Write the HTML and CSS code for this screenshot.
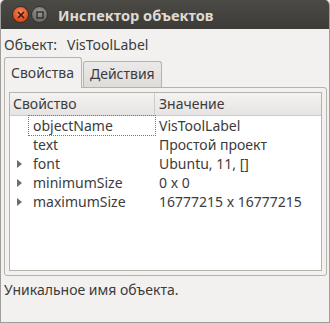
FILE: index.html
```html
<!DOCTYPE html>
<html>
  <head>
    <meta charset="UTF-8">
    <title>Инспектор объектов</title>
    <link rel="stylesheet" href="styles.css">
  </head>
  <body>
    <div class="window">
      <div class="titlebar">
        <span class="btn btn-close">
          <svg width="8" height="8" viewBox="0 0 8 8"><path d="M1 1L7 7M7 1L1 7" stroke="#3a1a10" stroke-width="1.6"/></svg>
        </span>
        <span class="btn btn-min">
          <svg width="8" height="8" viewBox="0 0 8 8"><rect x="1" y="1" width="6" height="6" fill="none" stroke="#2e2e2b" stroke-width="1.4"/></svg>
        </span>
        <span class="title">Инспектор объектов</span>
      </div>

      <div class="content">
        <div class="object-row">Объект:<span class="object-name">VisToolLabel</span></div>

        <div class="tabs">
          <div class="tab active">Свойства</div>
          <div class="tab">Действия</div>
        </div>

        <div class="pane">
          <div class="tree">
            <div class="tree-head">
              <div class="col-name">Свойство</div>
              <div class="col-value">Значение</div>
            </div>
            <div class="row">
              <div class="col-name"><span class="arrow"></span><span class="focus">objectName</span></div>
              <div class="col-value">VisToolLabel</div>
            </div>
            <div class="row">
              <div class="col-name"><span class="arrow"></span>text</div>
              <div class="col-value">Простой проект</div>
            </div>
            <div class="row">
              <div class="col-name"><span class="arrow closed"></span>font</div>
              <div class="col-value">Ubuntu, 11, []</div>
            </div>
            <div class="row">
              <div class="col-name"><span class="arrow closed"></span>minimumSize</div>
              <div class="col-value">0 x 0</div>
            </div>
            <div class="row">
              <div class="col-name"><span class="arrow closed"></span>maximumSize</div>
              <div class="col-value">16777215 x 16777215</div>
            </div>
          </div>
        </div>

        <div class="status">Уникальное имя объекта.</div>
      </div>
    </div>
  </body>
</html>
```

FILE: styles.css
```css
html * {
  box-sizing: border-box;
}

body {
  margin: 0;
  background: #f2f1f0;
  font-family: "Noto Sans", "DejaVu Sans", sans-serif;
  font-size: 14px;
  color: #3c3c3c;
}

.window {
  width: 330px;
  height: 323px;
  display: flex;
  flex-direction: column;
  border-left: 1px solid #9e9d99;
  border-right: 1px solid #9e9d99;
  border-bottom: 1px solid #9e9d99;
  border-radius: 5px 5px 0 0;
  overflow: hidden;
  background: #f2f1f0;
}

.titlebar {
  height: 29px;
  flex: none;
  display: flex;
  align-items: center;
  padding-left: 11px;
  background: linear-gradient(to bottom, #4b4a45, #3c3b37);
}

.btn {
  width: 17px;
  height: 17px;
  border-radius: 50%;
  display: flex;
  align-items: center;
  justify-content: center;
  margin-right: 2px;
}

.btn-close {
  background: radial-gradient(circle at 50% 35%, #f58a5e, #df4a1c 70%);
  border: 1px solid #3a2a24;
}

.btn-min {
  background: radial-gradient(circle at 50% 35%, #9c9b96, #6d6c67 70%);
  border: 1px solid #33322f;
}

.title {
  margin-left: 8px;
  font-weight: bold;
  font-size: 14.6px;
  color: #dfdbd2;
}

.content {
  flex: 1;
  display: flex;
  flex-direction: column;
  padding: 6px 2px 0 2px;
}

.object-row {
  height: 20px;
  line-height: 20px;
  padding-left: 1px;
}

.object-name {
  margin-left: 10px;
}

.tabs {
  display: flex;
  align-items: flex-end;
  height: 31px;
  margin-top: 1px;
  padding-left: 1px;
}

.tab {
  height: 26px;
  line-height: 24px;
  padding: 0 6px;
  border: 1px solid #b6b3ad;
  border-bottom: none;
  border-radius: 3px 3px 0 0;
  background: linear-gradient(to bottom, #ebeae8, #dedcd9);
  margin-left: 1px;
}

.tab.active {
  height: 31px;
  line-height: 29px;
  padding: 0 7px 0 6px;
  background: #f2f1f0;
  margin-left: 0;
  position: relative;
  top: 1px;
}

.pane {
  height: 189px;
  margin-left: 1px;
  border: 1px solid #b6b3ad;
  border-radius: 0 3px 3px 3px;
  padding: 4px;
}

.tree {
  height: 100%;
  background: #fff;
  border: 1px solid #b6b3ad;
}

.tree-head {
  display: flex;
  height: 23px;
  line-height: 22px;
  background: linear-gradient(to bottom, #f4f3f2, #e6e4e2);
  border-bottom: 1px solid #cfccc8;
}

.tree-head .col-name {
  padding-left: 3px;
  border-right: 1px solid #cfccc8;
}

.col-name {
  width: 145px;
  flex: none;
  display: flex;
  align-items: center;
}

.col-value {
  padding-left: 4px;
}

.row {
  display: flex;
  height: 19px;
  line-height: 19px;
}

.row:first-of-type {
  margin-top: 2px;
}

.row .col-name {
  padding-left: 6px;
}

.arrow {
  width: 14px;
  height: 19px;
  margin-right: 3px;
  flex: none;
  position: relative;
}

.arrow.closed::after {
  content: "";
  position: absolute;
  left: 1px;
  top: 6px;
  border-left: 5px solid #6e6c69;
  border-top: 4px solid transparent;
  border-bottom: 4px solid transparent;
}

.focus {
  outline: 1px dotted #7a7874;
  outline-offset: 0;
  margin-left: -4px;
  padding-left: 4px;
  flex: 1;
  height: 19px;
}

.status {
  margin-top: 4px;
  height: 20px;
  line-height: 20px;
  padding-left: 1px;
}
```
